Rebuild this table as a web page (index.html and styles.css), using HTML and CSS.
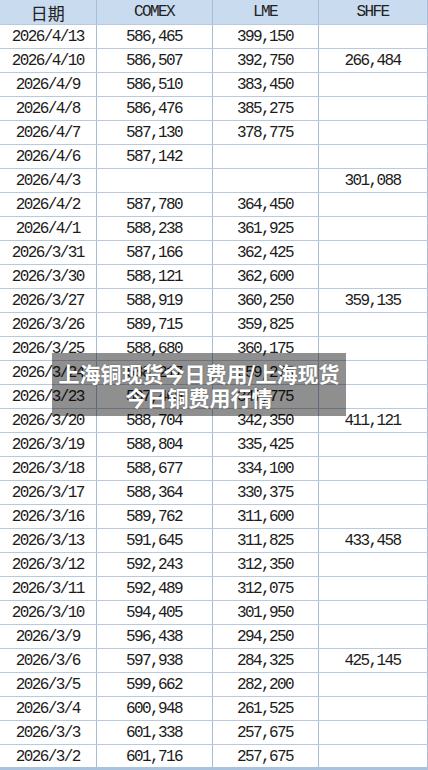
FILE: index.html
```html
<!DOCTYPE html>
<html lang="zh">
<head>
<meta charset="utf-8">
<title>上海铜现货今日费用</title>
<link rel="stylesheet" href="styles.css">
</head>
<body>
<div class="page">
  <table class="grid">
    <colgroup>
      <col class="c1"><col class="c2"><col class="c3"><col class="c4">
    </colgroup>
    <thead>
      <tr><th class="cjk">日期</th><th>COMEX</th><th>LME</th><th>SHFE</th></tr>
    </thead>
    <tbody>
      <tr><td>2026/4/13</td><td>586,465</td><td>399,150</td><td></td></tr>
      <tr><td>2026/4/10</td><td>586,507</td><td>392,750</td><td>266,484</td></tr>
      <tr><td>2026/4/9</td><td>586,510</td><td>383,450</td><td></td></tr>
      <tr><td>2026/4/8</td><td>586,476</td><td>385,275</td><td></td></tr>
      <tr><td>2026/4/7</td><td>587,130</td><td>378,775</td><td></td></tr>
      <tr><td>2026/4/6</td><td>587,142</td><td></td><td></td></tr>
      <tr><td>2026/4/3</td><td></td><td></td><td>301,088</td></tr>
      <tr><td>2026/4/2</td><td>587,780</td><td>364,450</td><td></td></tr>
      <tr><td>2026/4/1</td><td>588,238</td><td>361,925</td><td></td></tr>
      <tr><td>2026/3/31</td><td>587,166</td><td>362,425</td><td></td></tr>
      <tr><td>2026/3/30</td><td>588,121</td><td>362,600</td><td></td></tr>
      <tr><td>2026/3/27</td><td>588,919</td><td>360,250</td><td>359,135</td></tr>
      <tr><td>2026/3/26</td><td>589,715</td><td>359,825</td><td></td></tr>
      <tr><td>2026/3/25</td><td>588,680</td><td>360,175</td><td></td></tr>
      <tr><td>2026/3/24</td><td>588,217</td><td>359,275</td><td></td></tr>
      <tr><td>2026/3/23</td><td>587,465</td><td>347,775</td><td></td></tr>
      <tr><td>2026/3/20</td><td>588,704</td><td>342,350</td><td>411,121</td></tr>
      <tr><td>2026/3/19</td><td>588,804</td><td>335,425</td><td></td></tr>
      <tr><td>2026/3/18</td><td>588,677</td><td>334,100</td><td></td></tr>
      <tr><td>2026/3/17</td><td>588,364</td><td>330,375</td><td></td></tr>
      <tr><td>2026/3/16</td><td>589,762</td><td>311,600</td><td></td></tr>
      <tr><td>2026/3/13</td><td>591,645</td><td>311,825</td><td>433,458</td></tr>
      <tr><td>2026/3/12</td><td>592,243</td><td>312,350</td><td></td></tr>
      <tr><td>2026/3/11</td><td>592,489</td><td>312,075</td><td></td></tr>
      <tr><td>2026/3/10</td><td>594,405</td><td>301,950</td><td></td></tr>
      <tr><td>2026/3/9</td><td>596,438</td><td>294,250</td><td></td></tr>
      <tr><td>2026/3/6</td><td>597,938</td><td>284,325</td><td>425,145</td></tr>
      <tr><td>2026/3/5</td><td>599,662</td><td>282,200</td><td></td></tr>
      <tr><td>2026/3/4</td><td>600,948</td><td>261,525</td><td></td></tr>
      <tr><td>2026/3/3</td><td>601,338</td><td>257,675</td><td></td></tr>
      <tr><td>2026/3/2</td><td>601,716</td><td>257,675</td><td></td></tr>
    </tbody>
  </table>
  <div class="caption">
    <div class="caption-line">上海铜现货今日费用/上海现货</div>
    <div class="caption-line">今日铜费用行情</div>
  </div>
</div>
</body>
</html>
```
FILE: styles.css
```css
html, body {
  margin: 0;
  padding: 0;
  background: #ffffff;
}
.page {
  position: relative;
  width: 428px;
  height: 770px;
  overflow: hidden;
  border-bottom: 3px solid #a9c2dd;
  box-sizing: border-box;
}
.grid {
  border-collapse: collapse;
  table-layout: fixed;
  width: 427px;
  font-family: "Liberation Mono", "DejaVu Sans Mono", monospace;
  font-size: 16px;
  letter-spacing: -1.6px;
  color: #1c1c1c;
}
.c1 { width: 96px; }
.c2 { width: 116px; }
.c3 { width: 106px; }
.c4 { width: 109px; }
.grid th, .grid td {
  padding: 0;
  text-align: center;
  border-right: 1px solid #a8bed6;
  border-bottom: 1px solid #b9cade;
  white-space: nowrap;
  overflow: hidden;
}
.grid th {
  height: 23px;
  padding-top: 1px;
  line-height: 23px;
  background: #c9dbef;
  font-weight: normal;
  color: #222222;
}
.grid th.cjk {
  font-family: "Noto Sans CJK SC", sans-serif;
  font-size: 17px;
  letter-spacing: 0;
}
.grid td {
  height: 21px;
  padding-top: 2px;
  line-height: 21px;
}
.caption {
  position: absolute;
  left: 52px;
  top: 353px;
  width: 294px;
  height: 63px;
  background: rgba(0, 0, 0, 0.44);
  display: flex;
  flex-direction: column;
  justify-content: center;
  align-items: center;
  color: #ffffff;
  font-family: "Noto Sans CJK SC", sans-serif;
  font-weight: 700;
  font-size: 21px;
  line-height: 24px;
  text-shadow: 0 0 2px rgba(0, 0, 0, 0.3);
}
```
